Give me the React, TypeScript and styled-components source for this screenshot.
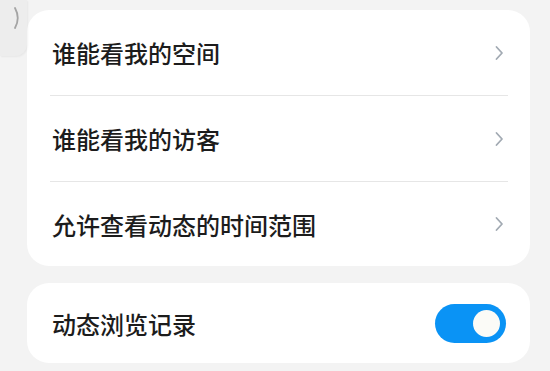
import styled, { createGlobalStyle } from "styled-components";

const GlobalStyle = createGlobalStyle`
  body {
    margin: 0;
    background: #f3f3f3;
    font-family: "Noto Sans CJK SC", "Noto Sans", sans-serif;
  }
`;

const Page = styled.div`
  position: relative;
  width: 550px;
  height: 371px;
  box-sizing: border-box;
  padding: 10px 20px 0 27px;
  display: flex;
  flex-direction: column;
  gap: 17px;
  background: #f3f3f3;
  overflow: hidden;
`;

const SideHandle = styled.div`
  position: absolute;
  left: 0;
  top: 0;
  width: 27px;
  height: 56px;
  background: #ededed;
  border-bottom-right-radius: 12px;
  box-shadow: 1px 1px 2px rgba(0, 0, 0, 0.05);
  display: flex;
  padding: 7px 0 0 13px;
  box-sizing: border-box;
`;

const Card = styled.div`
  background: #fff;
  border-radius: 22px;
  display: flex;
  flex-direction: column;
`;

const Row = styled.div<{ $h: number }>`
  height: ${(p) => p.$h}px;
  display: flex;
  align-items: center;
  justify-content: space-between;
  padding: 0 27px 0 25px;
`;

const Label = styled.span`
  font-size: 24px;
  color: #1c1c1c;
  font-weight: 500;
`;

const Divider = styled.div`
  height: 1px;
  background: #e6e6e6;
  margin: 0 22px 0 23px;
`;

const Toggle = styled.div<{ $on: boolean }>`
  width: 71px;
  height: 39px;
  border-radius: 20px;
  background: ${(p) => (p.$on ? "#0a93f5" : "#d8d8d8")};
  display: flex;
  align-items: center;
  justify-content: ${(p) => (p.$on ? "flex-end" : "flex-start")};
  padding: 0 6px;
  box-sizing: border-box;
  margin-right: -3px;
`;

const Knob = styled.div`
  width: 27px;
  height: 27px;
  border-radius: 50%;
  background: #fbfbf7;
`;

const Chevron = () => (
  <svg width="10" height="16" viewBox="0 0 10 16" style={{ marginRight: -1 }}>
    <polyline
      points="2.5,2 8,8 2.5,14"
      fill="none"
      stroke="#a2aab3"
      strokeWidth="1.8"
      strokeLinecap="round"
      strokeLinejoin="round"
    />
  </svg>
);

const HandleGlyph = () => (
  <svg width="8" height="22" viewBox="0 0 8 22">
    <path d="M2 1 Q7.5 11 2 21" fill="none" stroke="#a4a4a4" strokeWidth="1.8" strokeLinecap="round" />
  </svg>
);

const links = ["谁能看我的空间", "谁能看我的访客", "允许查看动态的时间范围"];

export default function App() {
  return (
    <Page>
      <GlobalStyle />
      <SideHandle>
        <HandleGlyph />
      </SideHandle>
      <Card>
        {links.map((t, i) => (
          <div key={t}>
            {i > 0 && <Divider />}
            <Row $h={i === 2 ? 84 : 85}>
              <Label>{t}</Label>
              <Chevron />
            </Row>
          </div>
        ))}
      </Card>
      <Card>
        <Row $h={80}>
          <Label>动态浏览记录</Label>
          <Toggle $on>
            <Knob />
          </Toggle>
        </Row>
      </Card>
    </Page>
  );
}
